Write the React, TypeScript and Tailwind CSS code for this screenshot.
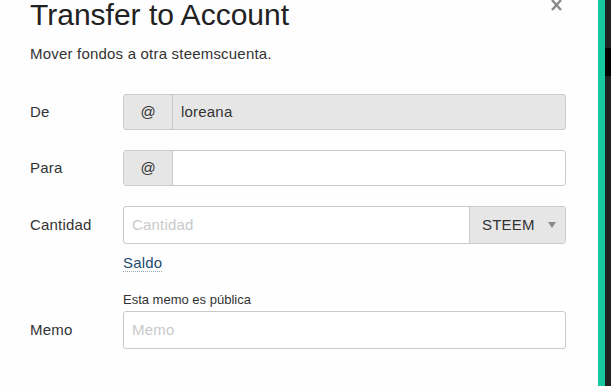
import React from "react";

const font = { fontFamily: '"Liberation Sans", Arial, sans-serif' };

function Row({ label, children }: { label: string; children: React.ReactNode }) {
  return (
    <div className="grid grid-cols-[93px_443px] items-center">
      <div className="text-[15px] tracking-[0.2px] text-[#333]">{label}</div>
      {children}
    </div>
  );
}

export default function App() {
  return (
    <div className="flex h-[386px] w-[611px] overflow-hidden" style={font}>
      <div className="relative flex-1 bg-[#fefefe] pl-[30px] text-[#333]">
        <svg
          className="absolute left-[551px] top-0"
          width="11"
          height="11"
          viewBox="0 0 11 11"
        >
          <path d="M1 0 L10 10 M10 0 L1 10" stroke="#8a8a8a" strokeWidth="2.4" />
        </svg>

        <h1 className="h-[30px] text-[30px] leading-[30px] text-[#222]">Transfer to Account</h1>
        <p className="mt-[14px] text-[15px] leading-[20px] tracking-[0.2px]">Mover fondos a otra steemscuenta.</p>

        <div className="mt-[30px] flex flex-col">
          <Row label="De">
            <div className="flex h-[36px] rounded-[3px] border border-[#cacaca] bg-[#e6e6e6]">
              <span className="flex w-[49px] items-center justify-center border-r border-[#cacaca] text-[15px]">@</span>
              <span className="flex items-center px-[8px] text-[15px] tracking-[0.2px] text-[#333]">loreana</span>
            </div>
          </Row>

          <div className="mt-[20px]">
            <Row label="Para">
              <div className="flex h-[36px] overflow-hidden rounded-[3px] border border-[#cacaca] bg-white">
                <span className="flex w-[49px] items-center justify-center border-r border-[#cacaca] bg-[#e6e6e6] text-[15px]">@</span>
                <span className="flex-1" />
              </div>
            </Row>
          </div>

          <div className="mt-[20px]">
            <Row label="Cantidad">
              <div className="flex h-[38px] overflow-hidden rounded-[3px] border border-[#cacaca] bg-white">
                <span className="flex flex-1 items-center px-[8px] text-[15px] tracking-[0.2px] text-[#cacaca]">Cantidad</span>
                <span className="flex w-[96px] items-center justify-between border-l border-[#cacaca] bg-[#e6e6e6] pl-[12px] pr-[9px] text-[15px] tracking-[0.2px] text-[#333]">
                  STEEM
                  <svg width="8" height="6" viewBox="0 0 8 6">
                    <path d="M0 0 H8 L4 6 Z" fill="#8a8a8a" />
                  </svg>
                </span>
              </div>
            </Row>
          </div>

          <div className="ml-[93px] mt-[7px] h-[20px]">
            <span className="border-b border-dotted border-[#9ab] text-[15px] leading-[18px] tracking-[0.2px] text-[#1f4a6e]">Saldo</span>
          </div>

          <div className="ml-[93px] mt-[21px] text-[13px] leading-[16px] text-[#333]">Esta memo es pública</div>

          <div className="mt-[3px]">
            <Row label="Memo">
              <div className="flex h-[38px] items-center rounded-[3px] border border-[#cacaca] bg-white px-[8px] text-[15px] tracking-[0.2px] text-[#cacaca]">
                Memo
              </div>
            </Row>
          </div>
        </div>
      </div>
      <div className="w-[7px] bg-[#16c89f]" />
      <div className="flex w-[6px] flex-col bg-[#1f2120]">
        <div className="h-[48px]" />
        <div className="h-[28px] bg-black" />
      </div>
    </div>
  );
}
